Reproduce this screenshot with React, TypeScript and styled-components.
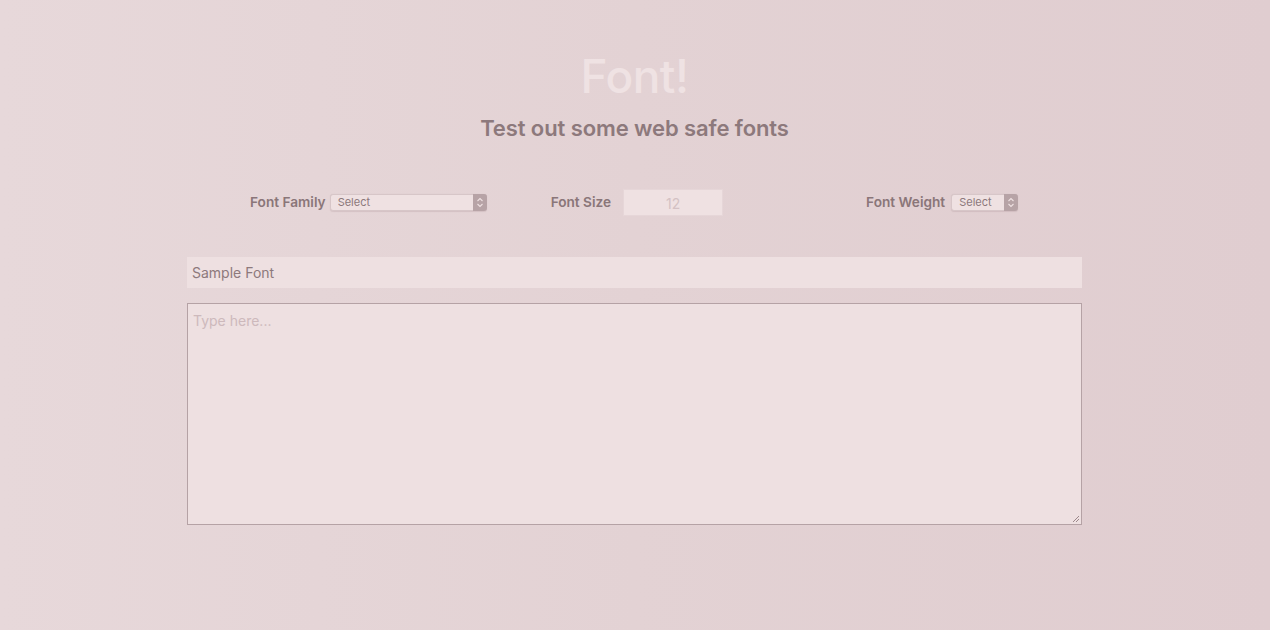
import React from "react";
import styled, { createGlobalStyle } from "styled-components";

const Global = createGlobalStyle`
  html, body { margin: 0; padding: 0; }
  body {
    min-height: 630px;
    background: linear-gradient(90deg, #e7d8da 0%, #e3d2d4 50%, #e0cdd0 100%);
    font-family: Inter, "Liberation Sans", Arial, sans-serif;
    color: #8c787b;
  }
`;

const Page = styled.main`
  width: 895px;
  margin: 0;
  padding: 47px 0 0 187px;
  display: flex;
  flex-direction: column;
  align-items: stretch;
`;

const Title = styled.h1`
  margin: 0;
  text-align: center;
  font-size: 46px;
  font-weight: 500;
  line-height: 58px;
  color: #efe2e3;
  letter-spacing: -0.5px;
`;

const Subtitle = styled.h2`
  margin: 8px 0 0;
  text-align: center;
  font-size: 22px;
  font-weight: 600;
  line-height: 30px;
  color: #8d797c;
  letter-spacing: -0.1px;
`;

const Controls = styled.div`
  display: flex;
  align-items: center;
  margin-top: 45px;
  padding-left: 63px;
  height: 28px;
`;

const Group = styled.label<{ $gap?: number }>`
  display: flex;
  align-items: center;
  margin-left: ${(p) => p.$gap ?? 0}px;
  font-size: 13.65px;
  font-weight: 600;
  color: #8a7679;
`;

const LabelText = styled.span<{ $space: number }>`
  margin-right: ${(p) => p.$space}px;
`;

const SelectBox = styled.div<{ $w: number }>`
  position: relative;
  width: ${(p) => p.$w}px;
  height: 17px;
  box-sizing: border-box;
  border: 1px solid #d7c6c8;
  border-radius: 3px;
  background: #efe1e2;
  display: flex;
  align-items: center;
  font-size: 11px;
  font-weight: 400;
  color: #8c787b;
  padding-left: 7px;
  box-shadow: 0 0.5px 1px rgba(120, 90, 95, 0.15);
`;

const Stepper = styled.div`
  position: absolute;
  right: -1px;
  top: -1px;
  bottom: -1px;
  width: 14px;
  border-radius: 0 3px 3px 0;
  background: #b7a3a6;
  display: flex;
  align-items: center;
  justify-content: center;
`;

const SizeInput = styled.div`
  width: 100px;
  height: 27px;
  box-sizing: border-box;
  background: #efe1e2;
  border: 1px solid #e6d6d8;
  display: flex;
  align-items: center;
  justify-content: center;
  font-size: 14px;
  font-weight: 400;
  color: #d4c1c4;
  padding-top: 2px;
`;

const SampleInput = styled.div`
  margin-top: 41px;
  height: 31px;
  box-sizing: border-box;
  background: #eee0e1;
  display: flex;
  align-items: center;
  padding-left: 5px;
  font-size: 14px;
  color: #8d797c;
`;

const TextArea = styled.div`
  position: relative;
  margin-top: 15px;
  height: 222px;
  box-sizing: border-box;
  background: #eee0e1;
  border: 1px solid #b5a2a5;
  padding: 8px 5px;
  font-size: 14px;
  color: #cdb9bc;
`;

const Grip = styled.svg`
  position: absolute;
  right: 1px;
  bottom: 1px;
`;

const Chevrons = () => (
  <svg width="8" height="11" viewBox="0 0 8 11">
    <path d="M1.5 4 L4 1.5 L6.5 4" fill="none" stroke="#efe1e2" strokeWidth="1.1" />
    <path d="M1.5 7 L4 9.5 L6.5 7" fill="none" stroke="#efe1e2" strokeWidth="1.1" />
  </svg>
);

export default function App() {
  return (
    <>
      <Global />
      <Page>
        <Title>Font!</Title>
        <Subtitle>Test out some web safe fonts</Subtitle>
        <Controls>
          <Group>
            <LabelText $space={4}>Font Family</LabelText>
            <SelectBox $w={157}>
              Select
              <Stepper>
                <Chevrons />
              </Stepper>
            </SelectBox>
          </Group>
          <Group $gap={64}>
            <LabelText $space={12}>Font Size</LabelText>
            <SizeInput>12</SizeInput>
          </Group>
          <Group $gap={143}>
            <LabelText $space={6}>Font Weight</LabelText>
            <SelectBox $w={67}>
              Select
              <Stepper>
                <Chevrons />
              </Stepper>
            </SelectBox>
          </Group>
        </Controls>
        <SampleInput>Sample Font</SampleInput>
        <TextArea>
          Type here...
          <Grip width="8" height="8" viewBox="0 0 8 8">
            <path d="M7 1 L1 7 M7 4 L4 7" stroke="#9c888b" strokeWidth="1" />
          </Grip>
        </TextArea>
      </Page>
    </>
  );
}
